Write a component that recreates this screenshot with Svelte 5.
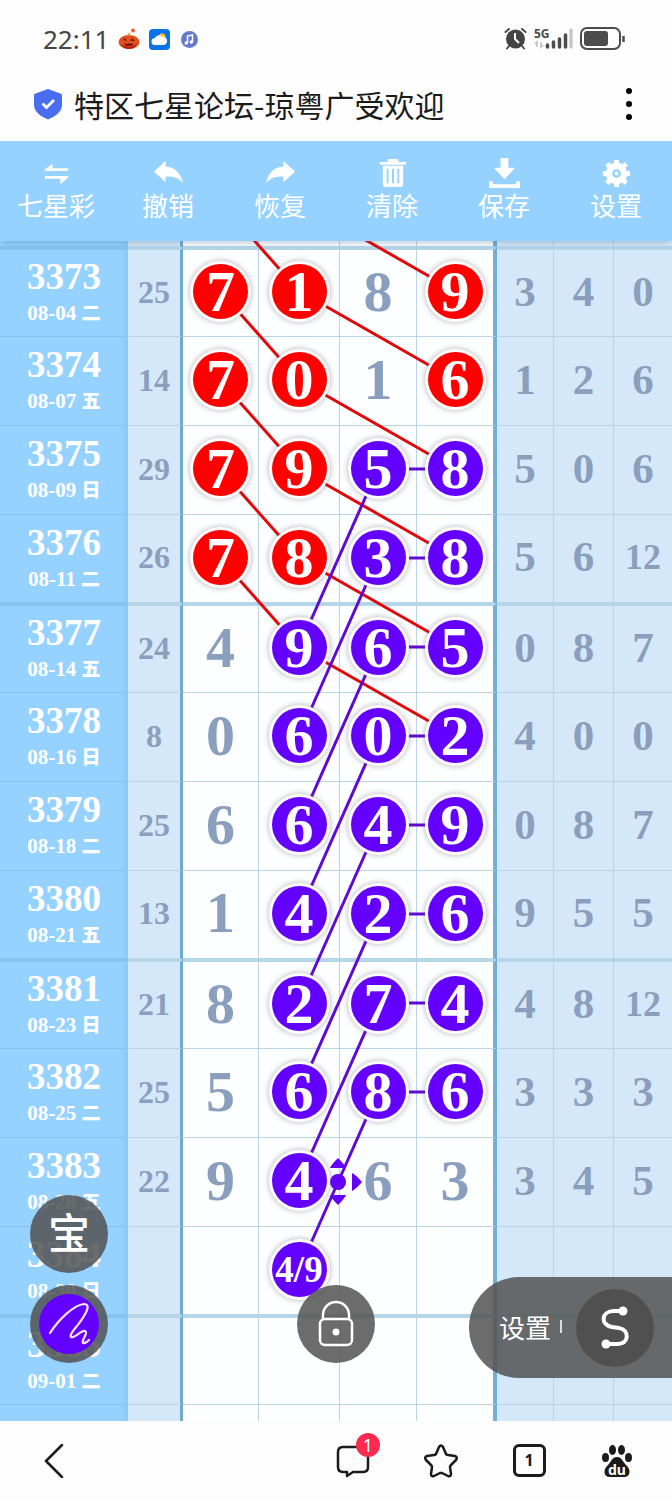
<script>
    let rows = [
        { no: '3373', date: '08-04', day: '二', sum: 25, main: [['7', 'r'], ['1', 'r'], ['8'], ['9', 'r']], tail: [3, 4, 0] },
        { no: '3374', date: '08-07', day: '五', sum: 14, main: [['7', 'r'], ['0', 'r'], ['1'], ['6', 'r']], tail: [1, 2, 6] },
        { no: '3375', date: '08-09', day: '日', sum: 29, main: [['7', 'r'], ['9', 'r'], ['5', 'p'], ['8', 'p']], tail: [5, 0, 6] },
        { no: '3376', date: '08-11', day: '二', sum: 26, main: [['7', 'r'], ['8', 'r'], ['3', 'p'], ['8', 'p']], tail: [5, 6, 12] },
        { no: '3377', date: '08-14', day: '五', sum: 24, main: [['4'], ['9', 'p'], ['6', 'p'], ['5', 'p']], tail: [0, 8, 7] },
        { no: '3378', date: '08-16', day: '日', sum: 8, main: [['0'], ['6', 'p'], ['0', 'p'], ['2', 'p']], tail: [4, 0, 0] },
        { no: '3379', date: '08-18', day: '二', sum: 25, main: [['6'], ['6', 'p'], ['4', 'p'], ['9', 'p']], tail: [0, 8, 7] },
        { no: '3380', date: '08-21', day: '五', sum: 13, main: [['1'], ['4', 'p'], ['2', 'p'], ['6', 'p']], tail: [9, 5, 5] },
        { no: '3381', date: '08-23', day: '日', sum: 21, main: [['8'], ['2', 'p'], ['7', 'p'], ['4', 'p']], tail: [4, 8, 12] },
        { no: '3382', date: '08-25', day: '二', sum: 25, main: [['5'], ['6', 'p'], ['8', 'p'], ['6', 'p']], tail: [3, 3, 3] },
        { no: '3383', date: '08-28', day: '五', sum: 22, main: [['9'], ['4', 'p'], ['6'], ['3']], tail: [3, 4, 5] },
        { no: '3384', date: '08-30', day: '日', sum: '', main: [[''], ['4/9', 'p'], [''], ['']], tail: ['', '', ''] },
        { no: '3385', date: '09-01', day: '二', sum: '', main: [[''], [''], [''], ['']], tail: ['', '', ''] }
    ]

    // column widths out of 672
    let cols = [128, 55, 76, 81, 77, 80, 57, 60, 58]
    let centers = [220, 299, 378, 455]

    // row, column -> row, column, colour
    let links = []
    for (let i = -1; i < 4; i++) {
        links.push([i, 0, i + 1, 1, 'r'])
        links.push([i, 1, i + 1, 3, 'r'])
    }
    links.push([4, 1, 5, 3, 'r'])
    for (let i = 2; i < 10; i++) {
        links.push([i, 2, i, 3, 'p'])
        links.push([i, 2, i + 2, 1, 'p'])
    }

    function rowY(i) {
        return 50 + i * 89
    }
</script>

<div class="page">
    <div class="status">
        <span class="time">22:11</span>
        <svg width="22" height="22" viewBox="0 0 22 22">
            <circle cx="15" cy="2.5" r="2" fill="#e8633c" />
            <ellipse cx="11" cy="14" rx="10.5" ry="7" fill="#e2501c" />
            <path d="M3 16q8 6 16 0q-2 5-8 5t-8-5z" fill="#b81d0b" />
            <path d="M5 12l2-2 2 3zM12 13l2-3 3 3zM6 15l3 1 2-1 2 1 3-1-2 3H8z" fill="#7d1708" />
            <path d="M10 8q0-2 2-3" stroke="#d8a33d" stroke-width="1.5" fill="none" />
        </svg>
        <svg width="21" height="21" viewBox="0 0 21 21">
            <rect width="21" height="21" rx="4" fill="#0873e8" />
            <circle cx="13" cy="8" r="3.5" fill="#ffc63a" />
            <path d="M6 16a3.5 3.5 0 0 1 0-7 4 4 0 0 1 7-1 4 4 0 0 1 2 8z" fill="#fff" />
        </svg>
        <svg class="music" width="17" height="17" viewBox="0 0 17 17">
            <circle cx="8.5" cy="8.5" r="8.5" fill="#6578ca" />
            <path d="M6.5 12V5l5-1v7" stroke="#fff" stroke-width="1.5" fill="none" />
            <circle cx="5.3" cy="12" r="1.8" fill="#fff" />
            <circle cx="10.3" cy="11" r="1.8" fill="#fff" />
        </svg>
        <svg class="signals" width="122" height="34" viewBox="0 -4 122 34">
            <g fill="none" stroke="#4c4c4c" stroke-width="2" stroke-linecap="round">
                <path d="M1.500 6L5 3M18 3l3.500 3M5 20l-2 2.500M18 20l2 2.500" />
            </g>
            <circle cx="11.5" cy="13" r="9.5" fill="#444" />
            <path d="M11 7v6l4 4" fill="none" stroke="#fff" stroke-width="2" />
            <text x="30" y="12" font-size="12" font-weight="700" fill="#4c4c4c">5G</text>
            <path d="M33 21v-5l-2 2M37 16v5l2-2" stroke="#bbb" stroke-width="1.5" fill="none" />
            <g stroke="#4c4c4c" stroke-width="3.5" stroke-linecap="round">
                <path d="M43.500 21v-2M49.500 21v-5M55.500 21v-8M61.500 21V9" />
                <path d="M67 21V4" stroke="#c8c8c8" />
            </g>
            <rect x="77" y="2" width="39" height="21" rx="6" fill="none" stroke="#4c4c4c" stroke-width="2" />
            <rect x="80" y="5" width="24" height="15" rx="3" fill="#4c4c4c" />
            <path d="M119.500 10v6" stroke="#4c4c4c" stroke-width="2.5" />
        </svg>
    </div>

    <header>
        <svg width="30" height="32" viewBox="0 0 30 32">
            <path d="M15 1l12.500 4.500q1.500.5 1.500 2V17c0 7-7 11.500-14 14.500C8 28.500 1 24 1 17V7.500q0-1.500 1.500-2z" fill="#4a6cf0" />
            <path d="M9.500 15.500l4 4 7.500-7.500" fill="none" stroke="#fff" stroke-width="2.8" />
        </svg>
        <h1>特区七星论坛-琼粤广受欢迎</h1>
        <button class="more" aria-label="更多">
            <svg width="8" height="34" viewBox="0 0 8 34">
                <circle cx="4" cy="4" r="3" /><circle cx="4" cy="17" r="3" /><circle cx="4" cy="30" r="3" />
            </svg>
        </button>
    </header>

    <div class="toolbar">
        <button>
            <svg viewBox="0 0 32 32"><path d="M5 12h23M4 20h23" stroke="#fff" stroke-width="2.8" /><path d="M3 13l9-7v7zM29 19l-9 8v-8z" /></svg>
            七星彩
        </button>
        <button>
            <svg viewBox="0 0 32 32"><path d="M1 14L13 3v6c9 0 15 5 18 17-5-6-10-7-18-7v6z" /></svg>
            撤销
        </button>
        <button>
            <svg viewBox="0 0 32 32"><path d="M31 14L19 3v6C10 9 4 14 1 26c5-6 10-7 18-7v6z" /></svg>
            恢复
        </button>
        <button>
            <svg viewBox="0 0 32 32"><path d="M11 4V2.500Q11 1 12.500 1h8Q22 1 22 2.500V4h8v3H3V4zM6 8h21v19q0 3-3 3H9q-3 0-3-3z" /><path d="M11 11v15M16.500 11v15M22 11v15" stroke="#96d2ff" stroke-width="2" /></svg>
            清除
        </button>
        <button>
            <svg viewBox="0 0 32 32"><path d="M12 0h8v10h7L16 22 5 10h7zM0 24h4v3h24v-3h4v7H0z" /></svg>
            保存
        </button>
        <button>
            <svg viewBox="0 0 32 32">
                <g fill="none" stroke="#fff"><circle cx="16" cy="16" r="7.5" stroke-width="7" /><path d="M16 2v28M2 16h28M6 6l20 20M26 6L6 26" stroke-width="5" /></g>
                <circle cx="16" cy="16" r="4.5" fill="#96d2ff" /><circle cx="16" cy="16" r="2" />
            </svg>
            设置
        </button>
    </div>

    <main>
        <table>
            <colgroup>
                {#each cols as w}
                    <col style="width:{(w / 672) * 100}%">
                {/each}
            </colgroup>
            <tbody>
                <tr class="edge top">
                    {#each cols as w}<td></td>{/each}
                </tr>
                {#each rows as row, i}
                    <tr class:first={i % 4 === 0} class:last={i % 4 === 3}>
                        <th scope="row">
                            <span class="no">{row.no}</span>
                            <span class="date">{row.date} <b>{row.day}</b></span>
                        </th>
                        <td>{row.sum}</td>
                        {#each row.main as [num, color]}
                            <td>
                                {#if color}
                                    <span class="ball {color}" class:pair={num.length > 1}>{num}</span>
                                {:else}
                                    {num}
                                {/if}
                            </td>
                        {/each}
                        {#each row.tail as num}
                            <td class:small={num > 9}>{num}</td>
                        {/each}
                    </tr>
                {/each}
                <tr class="edge bottom">
                    {#each cols as w}<td></td>{/each}
                </tr>
            </tbody>
        </table>

        <svg class="links" viewBox="0 0 672 1180" preserveAspectRatio="none">
            {#each links as [r1, c1, r2, c2, color]}
                <line class={color} x1={centers[c1]} y1={rowY(r1)} x2={centers[c2]} y2={rowY(r2)} />
            {/each}
            <g fill="#6400ff">
                <circle cx="338" cy="941" r="8" />
                <path d="M330 927q1-3 8-10 7 7 8 10zM330 954q1 3 8 10 7-7 8-10zM352 932q3 1 10 9-7 8-10 9z" />
            </g>
        </svg>

        <button class="float bao">宝</button>
        <button class="float pen" aria-label="画笔">
            <svg width="62" height="62" viewBox="0 0 62 62">
                <circle cx="31" cy="31" r="30" fill="#6400ff" />
                <path d="M12 40C21 26 36 12 46 11c8 0 1 11-4 18-4 6-11 12-9 15 3 2 10-7 14-6 4 2-4 9-2 12 2 1 4-1 6-3" fill="none" stroke="#ffe3ff" stroke-width="2.2" stroke-linecap="round" />
            </svg>
        </button>
        <button class="float lock" aria-label="锁定">
            <svg width="36" height="48" viewBox="0 0 36 48" fill="none" stroke="#fff" stroke-width="2.5">
                <rect x="2" y="19" width="32" height="26" rx="5" />
                <path d="M5 19v-4a13 13 0 0 1 26 0v4" />
                <circle cx="18" cy="32" r="3.5" fill="#fff" stroke="none" />
            </svg>
        </button>
        <div class="drawer">
            <button class="set">设置<i></i></button>
            <button class="curve" aria-label="曲线">
                <svg width="30" height="44" viewBox="0 0 30 44">
                    <path d="M23 5H14C1 5 0 19 12 21l7 1c11 2 10 16-1 16H6" fill="none" stroke="#fff" stroke-width="4" />
                    <circle cx="23" cy="5" r="4.5" fill="#fff" /><circle cx="6" cy="38" r="4.5" fill="#fff" />
                </svg>
            </button>
        </div>
    </main>

    <nav>
        <button class="back" aria-label="返回">
            <svg width="20" height="34" viewBox="0 0 20 34"><path d="M18 1L2 17l16 16" /></svg>
        </button>
        <button aria-label="评论">
            <svg width="34" height="34" viewBox="0 0 34 34"><path d="M7 3h20q5 0 5 5v15q0 5-5 5H17l-6 4v-4H7q-5 0-5-5V8q0-5 5-5z" /></svg>
            <span class="badge">1</span>
        </button>
        <button aria-label="收藏">
            <svg width="34" height="34" viewBox="0 0 34 34"><path d="M15 3q2-3 4 0l3 7q1 1 2 1l7 1q3 1 1 4l-5 5q-1 1-1 2l1 7q0 3-3 2l-6-3h-2l-6 3q-3 1-3-2l1-7q0-1-1-2l-5-5q-2-3 1-4l7-1q1 0 2-1z" /></svg>
        </button>
        <button aria-label="窗口">
            <span class="tabs">1</span>
        </button>
        <button aria-label="百度">
            <svg width="32" height="34" viewBox="0 0 32 34">
                <g fill="#1b1b1b" stroke="none">
                    <ellipse cx="11.5" cy="6" rx="3.5" ry="5" /><ellipse cx="20.5" cy="6" rx="3.5" ry="5" />
                    <ellipse cx="4.500" cy="13.5" rx="3.5" ry="4.5" /><ellipse cx="27.5" cy="13.5" rx="3.5" ry="4.5" />
                    <path d="M16 13c5 0 6 5 9 8 5 4 5 12-2 12H9c-7 0-7-8-2-12 3-3 4-8 9-8z" />
                </g>
                <text x="16" y="31" text-anchor="middle" font-size="14" font-weight="700" fill="#fff">du</text>
            </svg>
        </button>
    </nav>
</div>

<style>
    :global(body) {
        background: #fdfdfd;
    }
    .page {
        font-family: "Noto Sans", "Noto Sans CJK SC", sans-serif;
        color: #1b1b1b;
        overflow: hidden;
    }
    button {
        border: 0;
        padding: 0;
        background: none;
        color: inherit;
        font: inherit;
    }
    svg {
        display: block;
    }
    .status {
        display: flex;
        align-items: center;
        gap: 9px;
        height: 70px;
        padding: 8px 46px 0 43px;
        box-sizing: border-box;
    }
    .time {
        font-size: 26px;
        color: #444;
    }
    .music {
        margin-left: 2px;
    }
    .signals {
        margin-left: auto;
    }
    header {
        display: flex;
        align-items: center;
        height: 71px;
        padding: 0 39px 4px 33px;
        box-sizing: border-box;
    }
    h1 {
        margin: 0 auto 0 11px;
        font-family: "Noto Sans CJK SC", sans-serif;
        font-size: 30px;
        font-weight: 400;
        line-height: 40px;
        white-space: nowrap;
    }
    .toolbar {
        position: relative;
        z-index: 3;
        display: grid;
        grid-template-columns: repeat(6, 1fr);
        height: 100px;
        background: #96d2ff;
        box-shadow: 0 4px 6px -2px rgba(50, 90, 130, 0.3);
    }
    .toolbar button {
        display: flex;
        flex-direction: column;
        align-items: center;
        padding-top: 17px;
        color: #fff;
        font-family: "Noto Sans CJK SC", sans-serif;
        font-size: 26px;
        line-height: 32px;
    }
    .toolbar svg {
        width: 31px;
        height: 31px;
        fill: #fff;
    }

    main {
        position: relative;
    }
    table {
        width: 100%;
        table-layout: fixed;
        border-collapse: separate;
        border-spacing: 0;
        font-family: "Liberation Serif", serif;
        font-weight: 700;
        color: #8a9fbd;
    }
    tr {
        height: 89px;
    }
    th, td {
        padding: 0;
        box-sizing: border-box;
        text-align: center;
        vertical-align: middle;
        line-height: 56px;
        font-size: 43px;
        background: #d5e8fa;
        border-right: 1px solid #b9d4e4;
        border-bottom: 1px solid #b9d4e4;
    }
    td {
        padding-bottom: 3px;
    }
    th, tr.edge td:first-child {
        background: linear-gradient(to right, #96d2ff 94%, #8bc9f5);
        color: #fff;
        border-right: 0;
        border-bottom-color: #86c3ee;
    }
    td:nth-child(2) {
        font-size: 32px;
        border-right: 3px solid #6fabcb;
    }
    td:nth-child(n+3):nth-child(-n+6) {
        font-size: 58px;
        background: #fdfeff;
    }
    td:nth-child(6) {
        border-right: 4px solid #74afd3;
    }
    td:last-child {
        border-right: 0;
    }
    td.small {
        font-size: 36px;
    }
    tr.last > *, tr.top > * {
        border-bottom: 2px solid #b5d5e8;
    }
    tr.first > * {
        border-top: 2px solid #b5d5e8;
    }
    tr.last > th, tr.first > th {
        border-color: #86c3ee;
    }
    tr.edge td {
        padding: 0;
        line-height: 0;
    }
    tr.top {
        height: 7px;
    }
    tr.bottom {
        height: 16px;
    }
    tr.bottom td {
        border-bottom: 0;
    }
    .no, .date {
        display: block;
    }
    .no {
        font-size: 37px;
        line-height: 40px;
    }
    .date {
        font-size: 21px;
        line-height: 32px;
    }
    .date b {
        font-family: "Noto Sans CJK SC", sans-serif;
        font-size: 19px;
        line-height: 20px;
    }
    .ball {
        position: relative;
        z-index: 2;
        display: block;
        width: 55px;
        height: 55px;
        margin: 0 auto;
        border-radius: 50%;
        color: #fff;
        line-height: 55px;
        box-shadow: 0 0 0 3px #fffafa, 0 0 5px 4px rgba(90, 90, 90, 0.35);
    }
    .ball.r {
        background: #fe0000;
    }
    .ball.p {
        background: #6400ff;
    }
    .ball.pair {
        font-size: 37px;
    }
    .links {
        position: absolute;
        inset: 0;
        z-index: 1;
        width: 100%;
        height: 100%;
    }
    line {
        stroke-width: 3px;
    }
    line.r {
        stroke: #e2080c;
    }
    line.p {
        stroke: #5f0ad2;
    }

    .float {
        position: absolute;
        z-index: 4;
        display: flex;
        align-items: center;
        justify-content: center;
        width: 78px;
        height: 78px;
        border-radius: 50%;
        background: rgba(82, 82, 82, 0.85);
        color: #fff;
    }
    .bao {
        left: 30px;
        bottom: 148px;
        font-family: "Noto Sans CJK SC", sans-serif;
        font-size: 42px;
        line-height: 72px;
        font-weight: 500;
        align-items: flex-start;
    }
    .pen {
        left: 30px;
        bottom: 58px;
    }
    .lock {
        left: calc(50% - 39px);
        bottom: 58px;
    }
    .drawer {
        position: absolute;
        z-index: 4;
        right: 0;
        bottom: 43px;
        display: flex;
        align-items: center;
        gap: 14px;
        height: 101px;
        padding: 0 18px 0 30px;
        border-radius: 51px 0 0 51px;
        background: rgba(82, 82, 82, 0.85);
    }
    .set {
        display: flex;
        align-items: center;
        gap: 9px;
        padding-bottom: 3px;
        color: #fff;
        font-family: "Noto Sans CJK SC", sans-serif;
        font-size: 26px;
    }
    .set i {
        width: 2px;
        height: 13px;
        background: #ddd;
    }
    .curve {
        display: flex;
        align-items: center;
        justify-content: center;
        width: 78px;
        height: 78px;
        border-radius: 50%;
        background: #505050;
    }

    nav {
        display: flex;
        align-items: center;
        gap: 28px;
        height: 79px;
        padding: 0 25px 0 24px;
        background: #fdfdfd;
    }
    nav button {
        position: relative;
        display: flex;
        align-items: center;
        justify-content: center;
        width: 60px;
        height: 60px;
    }
    nav svg {
        fill: none;
        stroke: #1b1b1b;
        stroke-width: 2.5px;
        stroke-linejoin: round;
        stroke-linecap: round;
    }
    nav text {
        stroke: none;
    }
    .back {
        margin-right: auto;
    }
    .badge {
        position: absolute;
        top: 2px;
        right: 3px;
        width: 24px;
        height: 24px;
        border-radius: 50%;
        background: #fb2b50;
        color: #fff;
        font-size: 18px;
        line-height: 24px;
        text-align: center;
    }
    .tabs {
        width: 27px;
        height: 27px;
        border: 3px solid #1b1b1b;
        border-radius: 6px;
        font-size: 16px;
        font-weight: 700;
        line-height: 27px;
        text-align: center;
    }
</style>
